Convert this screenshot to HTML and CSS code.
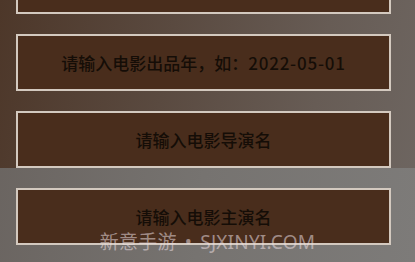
FILE: index.html
```html
<!DOCTYPE html>
<html>
<head>
    <meta charset="utf-8">
    <title>电影信息</title>
    <link rel="stylesheet" href="styles.css">
</head>
<body>
    <div class="page">
        <div class="form">
            <div class="field">请输入电影名称</div>
            <div class="field">请输入电影出品年，如：<span class="num">2022-05-01</span></div>
            <div class="field">请输入电影导演名</div>
            <div class="field">请输入电影主演名</div>
        </div>
        <div class="watermark">新意手游 • SJXINYI.COM</div>
    </div>
</body>
</html>
```

FILE: styles.css
```css
html, body {
    margin: 0;
    height: 100%;
    overflow: hidden;
}
body {
    font-family: "Noto Sans CJK SC", "Noto Sans", sans-serif;
}
.page {
    position: relative;
    display: flow-root;
    height: 100%;
    background:
        linear-gradient(100deg, #4d3729 0%, #5a4a40 40%, #675c55 75%, #6d6560 100%) top / 100% 168px no-repeat,
        linear-gradient(95deg, #6a6460 0%, #767370 50%, #7d7b79 100%);
}
.form {
    display: flex;
    flex-direction: column;
    gap: 20px;
    margin-top: -43px;
    padding: 0 24px 0 16px;
}
.field {
    box-sizing: border-box;
    height: 57px;
    display: flex;
    align-items: center;
    justify-content: center;
    background: #492d1c;
    border: 2px solid #d3c9bf;
    color: #150d07;
    font-size: 17px;
    font-weight: 500;
}
.num {
    letter-spacing: 0.8px;
}
.watermark {
    position: absolute;
    left: 0;
    right: 0;
    top: 227px;
    text-align: center;
    font-family: "Noto Sans", "Noto Sans CJK SC", sans-serif;
    color: rgba(235, 222, 225, 0.55);
    font-size: 19px;
    letter-spacing: 0.2px;
    word-spacing: 3px;
}
```
